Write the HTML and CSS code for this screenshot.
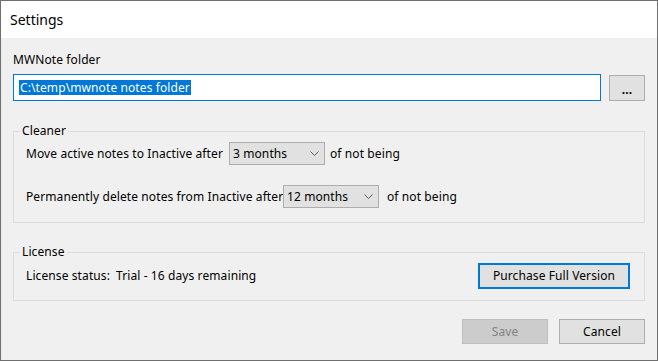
FILE: index.html
```html
<!DOCTYPE html>
<html lang="en">
<head>
  <meta charset="UTF-8">
  <title>Settings</title>
  <link rel="stylesheet" href="styles.css">
</head>
<body>

  <div class="window">
    <div class="titlebar">Settings</div>

    <div class="content">
      <div class="field-label">MWNote folder</div>
      <div class="folder-row">
        <div class="textbox"><span class="selected">C:\temp\mwnote notes folder</span></div>
        <button class="btn browse">...</button>
      </div>

      <fieldset class="group cleaner">
        <legend>Cleaner</legend>
        <div class="option-row">
          <span class="option-label move">Move active notes to Inactive after</span>
          <div class="combo">
            <span>3 months</span>
            <svg width="9" height="5" viewBox="0 0 9 5"><polyline points="0.5,0.5 4.5,4.5 8.5,0.5" fill="none" stroke="#5a5a5a" stroke-width="1"/></svg>
          </div>
          <span class="suffix move">of not being</span>
        </div>
        <div class="option-row">
          <span class="option-label delete">Permanently delete notes from Inactive after</span>
          <div class="combo">
            <span>12 months</span>
            <svg width="9" height="5" viewBox="0 0 9 5"><polyline points="0.5,0.5 4.5,4.5 8.5,0.5" fill="none" stroke="#5a5a5a" stroke-width="1"/></svg>
          </div>
          <span class="suffix delete">of not being</span>
        </div>
      </fieldset>

      <fieldset class="group license">
        <legend>License</legend>
        <div class="license-row">
          <span class="status">License status:</span>
          <span class="status-value">Trial - 16 days remaining</span>
          <button class="btn purchase">Purchase Full Version</button>
        </div>
      </fieldset>

      <div class="footer">
        <button class="btn dialog" disabled>Save</button>
        <button class="btn dialog">Cancel</button>
      </div>
    </div>
  </div>

</body>
</html>
```

FILE: styles.css
```css
body {
  margin: 0;
  font-family: 'Noto Sans', sans-serif;
  font-size: 12px;
  line-height: 16px;
  letter-spacing: 0.1px;
  color: #000;
}

.window {
  width: 658px;
  height: 361px;
  box-sizing: border-box;
  border: 1px solid #6f6f6f;
  background-color: #f0f0f0;
}

.titlebar {
  height: 37px;
  display: flex;
  align-items: center;
  padding-left: 9px;
  background-color: #fff;
  font-size: 14px;
  letter-spacing: 0;
}

.content {
  display: flex;
  flex-direction: column;
  padding: 14px 12px 0;
}

.folder-row {
  display: flex;
  align-items: center;
  gap: 8px;
  margin-top: 6px;
}

.textbox {
  width: 588px;
  height: 27px;
  box-sizing: border-box;
  border: 1px solid #0078d7;
  background-color: #fff;
  display: flex;
  align-items: center;
  padding-left: 5px;
}

.selected {
  background-color: #0078d7;
  color: #fff;
  line-height: 15px;
  padding: 0 1px;
}

.btn {
  font-family: inherit;
  font-size: 12px;
  line-height: 16px;
  letter-spacing: inherit;
  color: #000;
  background-color: #e1e1e1;
  border: 1px solid #adadad;
  border-radius: 0;
  padding: 0;
  box-sizing: border-box;
}

.browse {
  width: 36px;
  height: 26px;
  font-weight: bold;
  padding-top: 4px;
}

/* group boxes */
.group {
  margin: 22px 0 0;
  padding: 3px 14px 14px 12px;
  border: 1px solid #dcdcdc;
  min-width: 0;
}

.group legend {
  padding: 0 2px;
  margin-left: -6px;
  line-height: 16px;
}

.license {
  margin-top: 21px;
  padding-bottom: 11px;
}

.option-row {
  display: flex;
  align-items: center;
  height: 23px;
  white-space: nowrap;
}

.option-row + .option-row {
  margin-top: 20px;
}

.option-label {
  flex-shrink: 0;
}

.option-label.move {
  width: 203px;
}

.option-label.delete {
  width: 257px;
}

.combo {
  flex-shrink: 0;
  width: 96px;
  height: 23px;
  box-sizing: border-box;
  border: 1px solid #adadad;
  background-color: #e1e1e1;
  display: flex;
  align-items: center;
  justify-content: space-between;
  padding: 0 5px 0 3px;
}

.suffix.move {
  margin-left: 5px;
}

.suffix.delete {
  margin-left: 8px;
}

.license-row {
  display: flex;
  align-items: center;
  height: 26px;
  white-space: nowrap;
}

.status-value {
  margin-left: 6px;
}

.purchase {
  margin-left: auto;
  width: 152px;
  height: 26px;
  border: 2px solid #0078d7;
}

.footer {
  display: flex;
  justify-content: flex-end;
  gap: 11px;
  margin-top: 18px;
}

.dialog {
  width: 86px;
  height: 25px;
}

.dialog:disabled {
  background-color: #cccccc;
  border-color: #bfbfbf;
  color: #838383;
}
```
